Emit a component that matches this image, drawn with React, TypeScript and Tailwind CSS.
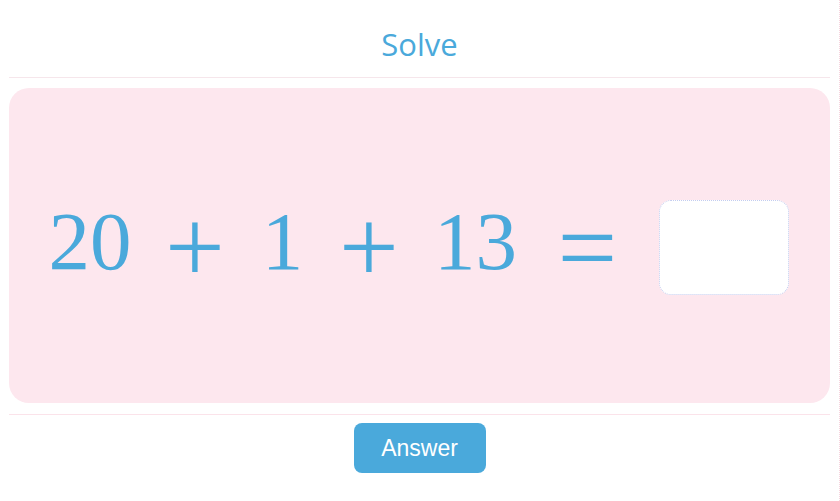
import { useState } from "react";

export default function App() {
  const [answer, setAnswer] = useState("");

  const blue = "text-[#4aa9db]";
  const serif = { fontFamily: '"Liberation Serif", "Times New Roman", serif' };

  return (
    <div className="w-[840px] h-[501px] bg-white border-r border-dotted border-[#f7d4de] px-[9px]">
      <div className="h-[78px] flex items-center justify-center pt-[12px] border-b border-[#f6e6eb]">
        <h1 className={`text-[31px] leading-none ${blue}`} style={{ fontFamily: '"Open Sans", "Noto Sans", sans-serif' }}>
          Solve
        </h1>
      </div>

      <div className="mt-[10px] h-[315px] rounded-[20px] bg-[#fde7ee] flex items-center pl-[31px]">
        <div className={`flex items-center leading-none ${blue}`} style={serif}>
          <span className="w-[100px] text-center text-[83px] mb-[8px]">20</span>
          <span className="w-[110px] text-center text-[106px] mt-[4px]">+</span>
          <span className="w-[65px] text-center text-[83px] mb-[8px]">1</span>
          <span className="w-[108px] text-center text-[106px] mt-[4px]">+</span>
          <span className="w-[105px] text-center text-[83px] mb-[8px]">13</span>
          <span className="w-[119px] text-center text-[106px] mt-[4px]">=</span>
        </div>
        <input
          value={answer}
          onChange={(e) => setAnswer(e.target.value)}
          className="ml-[12px] mt-[4px] w-[130px] h-[95px] rounded-[12px] bg-white border border-dotted border-[#c3cdf0] outline-none text-center text-[40px] text-[#4aa9db]"
        />
      </div>

      <div className="mt-[11px] border-t border-[#fbe3ea] flex justify-center pt-[8px]">
        <button
          className="w-[132px] h-[50px] rounded-[8px] bg-[#4aa9db] text-white text-[23px]"
          style={{ fontFamily: '"Liberation Sans", Arial, sans-serif' }}
        >
          Answer
        </button>
      </div>
    </div>
  );
}
